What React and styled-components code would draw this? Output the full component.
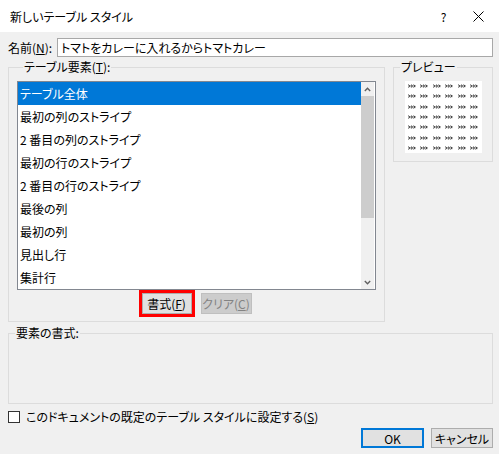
import React from 'react';
import styled, { createGlobalStyle } from 'styled-components';

const GlobalStyle = createGlobalStyle`
    html, body {
        margin: 0;
        padding: 0;
        background: #F0F0F0;
    }
    * {
        box-sizing: border-box;
    }
`

const font = `'Noto Sans CJK JP', 'Noto Sans', sans-serif`

// ダイアログ全体
const Dialog = styled.div`
    width: 499px;
    height: 454px;
    background: #F0F0F0;
    font-family: ${font};
    font-size: 12px;
    font-feature-settings: "palt";
    color: #000000;
    overflow: hidden;
    display: flex;
    flex-direction: column;
`

const TitleBar = styled.div`
    height: 32px;
    background: #FFFFFF;
    display: flex;
    align-items: center;
    padding-left: 10px;
    padding-right: 3px;
`

const Title = styled.span`
    flex: 1;
    font-size: 12px;
    color: #000000;
`

const TitleButton = styled.div`
    width: 35px;
    height: 32px;
    display: flex;
    align-items: center;
    justify-content: center;
    font-size: 12px;
`

const Body = styled.div`
    padding: 0 6px 0 8px;
    display: flex;
    flex-direction: column;
`

const NameRow = styled.div`
    display: flex;
    align-items: center;
    margin-top: 6px;
`

const Label = styled.span`
    width: 49px;
    white-space: nowrap;
`

const TextBox = styled.div`
    flex: 1;
    height: 19px;
    border: 1px solid #A8A8A8;
    background: #FFFFFF;
    display: flex;
    align-items: center;
    padding-left: 3px;
    white-space: nowrap;
`

const MiddleRow = styled.div`
    display: flex;
    align-items: flex-start;
    gap: 8px;
    margin-top: 3px;
`

const Group = styled.fieldset`
    margin: ${p => p.$top || '0'} 0 0 0;
    border: 1px solid #DCDCDC;
    padding: ${p => p.$pad || '0'};
    width: ${p => p.$w || 'auto'};
    min-height: ${p => p.$h || 'auto'};
    min-width: 0;
    display: flex;
    flex-direction: column;
    align-items: ${p => p.$center ? 'center' : 'stretch'};
`

const Legend = styled.legend`
    padding: 0 1px;
    margin-left: 6px;
    line-height: 14px;
    height: 14px;
    font-size: 12px;
    white-space: nowrap;
`

const ListBox = styled.div`
    height: 209px;
    border: 1px solid #828790;
    background: #FFFFFF;
    display: flex;
    margin-top: 7px;
`

const Items = styled.div`
    flex: 1;
    display: flex;
    flex-direction: column;
`

const Item = styled.div`
    height: 23px;
    line-height: 23px;
    padding-left: 2px;
    white-space: nowrap;
    background: ${p => p.$selected ? '#0078D7' : 'transparent'};
    color: ${p => p.$selected ? '#FFFFFF' : '#000000'};
`

const ScrollBar = styled.div`
    width: 13px;
    margin-right: 1px;
    background: #F0F0F0;
    display: flex;
    flex-direction: column;
`

const ScrollArrow = styled.div`
    height: 14px;
    display: flex;
    align-items: center;
    justify-content: center;
`

const Thumb = styled.div`
    height: 122px;
    background: #CDCDCD;
`

const Track = styled.div`
    flex: 1;
`

const ButtonRow = styled.div`
    display: flex;
    justify-content: ${p => p.$end ? 'flex-end' : 'center'};
    align-items: center;
    gap: ${p => p.$gap || '9px'};
    margin-top: ${p => p.$top || '0'};
`

const Button = styled.div`
    width: ${p => p.$w || '50px'};
    height: ${p => p.$h || '21px'};
    display: flex;
    align-items: center;
    justify-content: center;
    background: ${p => p.$disabled ? '#CCCCCC' : '#E1E1E1'};
    border: 1px solid ${p => p.$default ? '#0078D7' : p.$disabled ? '#BFBFBF' : '#ADADAD'};
    box-shadow: ${p => p.$default ? 'inset 0 0 0 1px #0078D7' : 'none'};
    color: ${p => p.$disabled ? '#838383' : '#000000'};
    outline: ${p => p.$marked ? '3px solid #FF0000' : 'none'};
    white-space: nowrap;
`

const Preview = styled.div`
    width: 77px;
    height: 72px;
    margin-top: 7px;
    background: #FFFFFF;
    display: grid;
    grid-template-columns: repeat(6, 12.6px);
    grid-auto-rows: 10.3px;
    justify-content: center;
    align-items: center;
    justify-items: center;
`

const CheckRow = styled.div`
    display: flex;
    align-items: center;
    gap: 6px;
    margin-top: 4px;
`

const CheckBox = styled.div`
    width: 12px;
    height: 12px;
    border: 1px solid #333333;
    background: #FFFFFF;
`

const Mark = () => (
    <svg width="8" height="4" viewBox="0 0 8 4">
        <path d="M0.2 1.5 H7.8 M0.2 2.7 H7.8" stroke="#9A9A9A" strokeWidth="0.8" />
        <path d="M0.4 0.6 L1.9 2 L0.4 3.4 M3 0.6 L4.5 2 L3 3.4 M5.6 0.6 L7.1 2 L5.6 3.4"
            fill="none" stroke="#404040" strokeWidth="1" />
    </svg>
)

const Chevron = ({ up }) => (
    <svg width="7" height="5" viewBox="0 0 7 5">
        <path d={up ? 'M0.8 4 L3.5 1.3 L6.2 4' : 'M0.8 1 L3.5 3.7 L6.2 1'}
            fill="none" stroke="#606060" strokeWidth="1.4" />
    </svg>
)

const items = [
    'テーブル全体',
    '最初の列のストライプ',
    '2 番目の列のストライプ',
    '最初の行のストライプ',
    '2 番目の行のストライプ',
    '最後の列',
    '最初の列',
    '見出し行',
    '集計行',
]

export default function App() {
    return (
        <>
            <GlobalStyle />
            <Dialog>
                <TitleBar>
                    <Title>新しいテーブル スタイル</Title>
                    <TitleButton>?</TitleButton>
                    <TitleButton>
                        <svg width="11" height="11" viewBox="0 0 11 11">
                            <path d="M0.5 0.5 L10.5 10.5 M10.5 0.5 L0.5 10.5" stroke="#000" strokeWidth="1" />
                        </svg>
                    </TitleButton>
                </TitleBar>

                <Body>
                    <NameRow>
                        <Label>名前(<u>N</u>):</Label>
                        <TextBox>トマトをカレーに入れるからトマトカレー</TextBox>
                    </NameRow>

                    <MiddleRow>
                        <Group $w="377px" $pad="0 8px 7px 8px">
                            <Legend>テーブル要素(<u>T</u>):</Legend>
                            <ListBox>
                                <Items>
                                    {items.map((t, i) => (
                                        <Item key={t} $selected={i === 0}>{t}</Item>
                                    ))}
                                </Items>
                                <ScrollBar>
                                    <ScrollArrow><Chevron up /></ScrollArrow>
                                    <Thumb />
                                    <Track />
                                    <ScrollArrow><Chevron /></ScrollArrow>
                                </ScrollBar>
                            </ListBox>
                            <ButtonRow $top="3px">
                                <Button $marked>書式(<u>F</u>)</Button>
                                <Button $w="51px" $disabled>クリア(<u>C</u>)</Button>
                            </ButtonRow>
                        </Group>

                        <Group $w="100px" $pad="0 0 8px 0" $center>
                            <Legend>プレビュー</Legend>
                            <Preview>
                                {Array.from({ length: 42 }).map((_, i) => <Mark key={i} />)}
                            </Preview>
                        </Group>
                    </MiddleRow>

                    <Group $h="78px" $top="4px">
                        <Legend>要素の書式:</Legend>
                    </Group>

                    <CheckRow>
                        <CheckBox />
                        <span>このドキュメントの既定のテーブル スタイルに設定する(<u>S</u>)</span>
                    </CheckRow>

                    <ButtonRow $end $gap="7px" $top="3px">
                        <Button $w="63px" $h="20px" $default>OK</Button>
                        <Button $w="62px" $h="20px">キャンセル</Button>
                    </ButtonRow>
                </Body>
            </Dialog>
        </>
    );
}
